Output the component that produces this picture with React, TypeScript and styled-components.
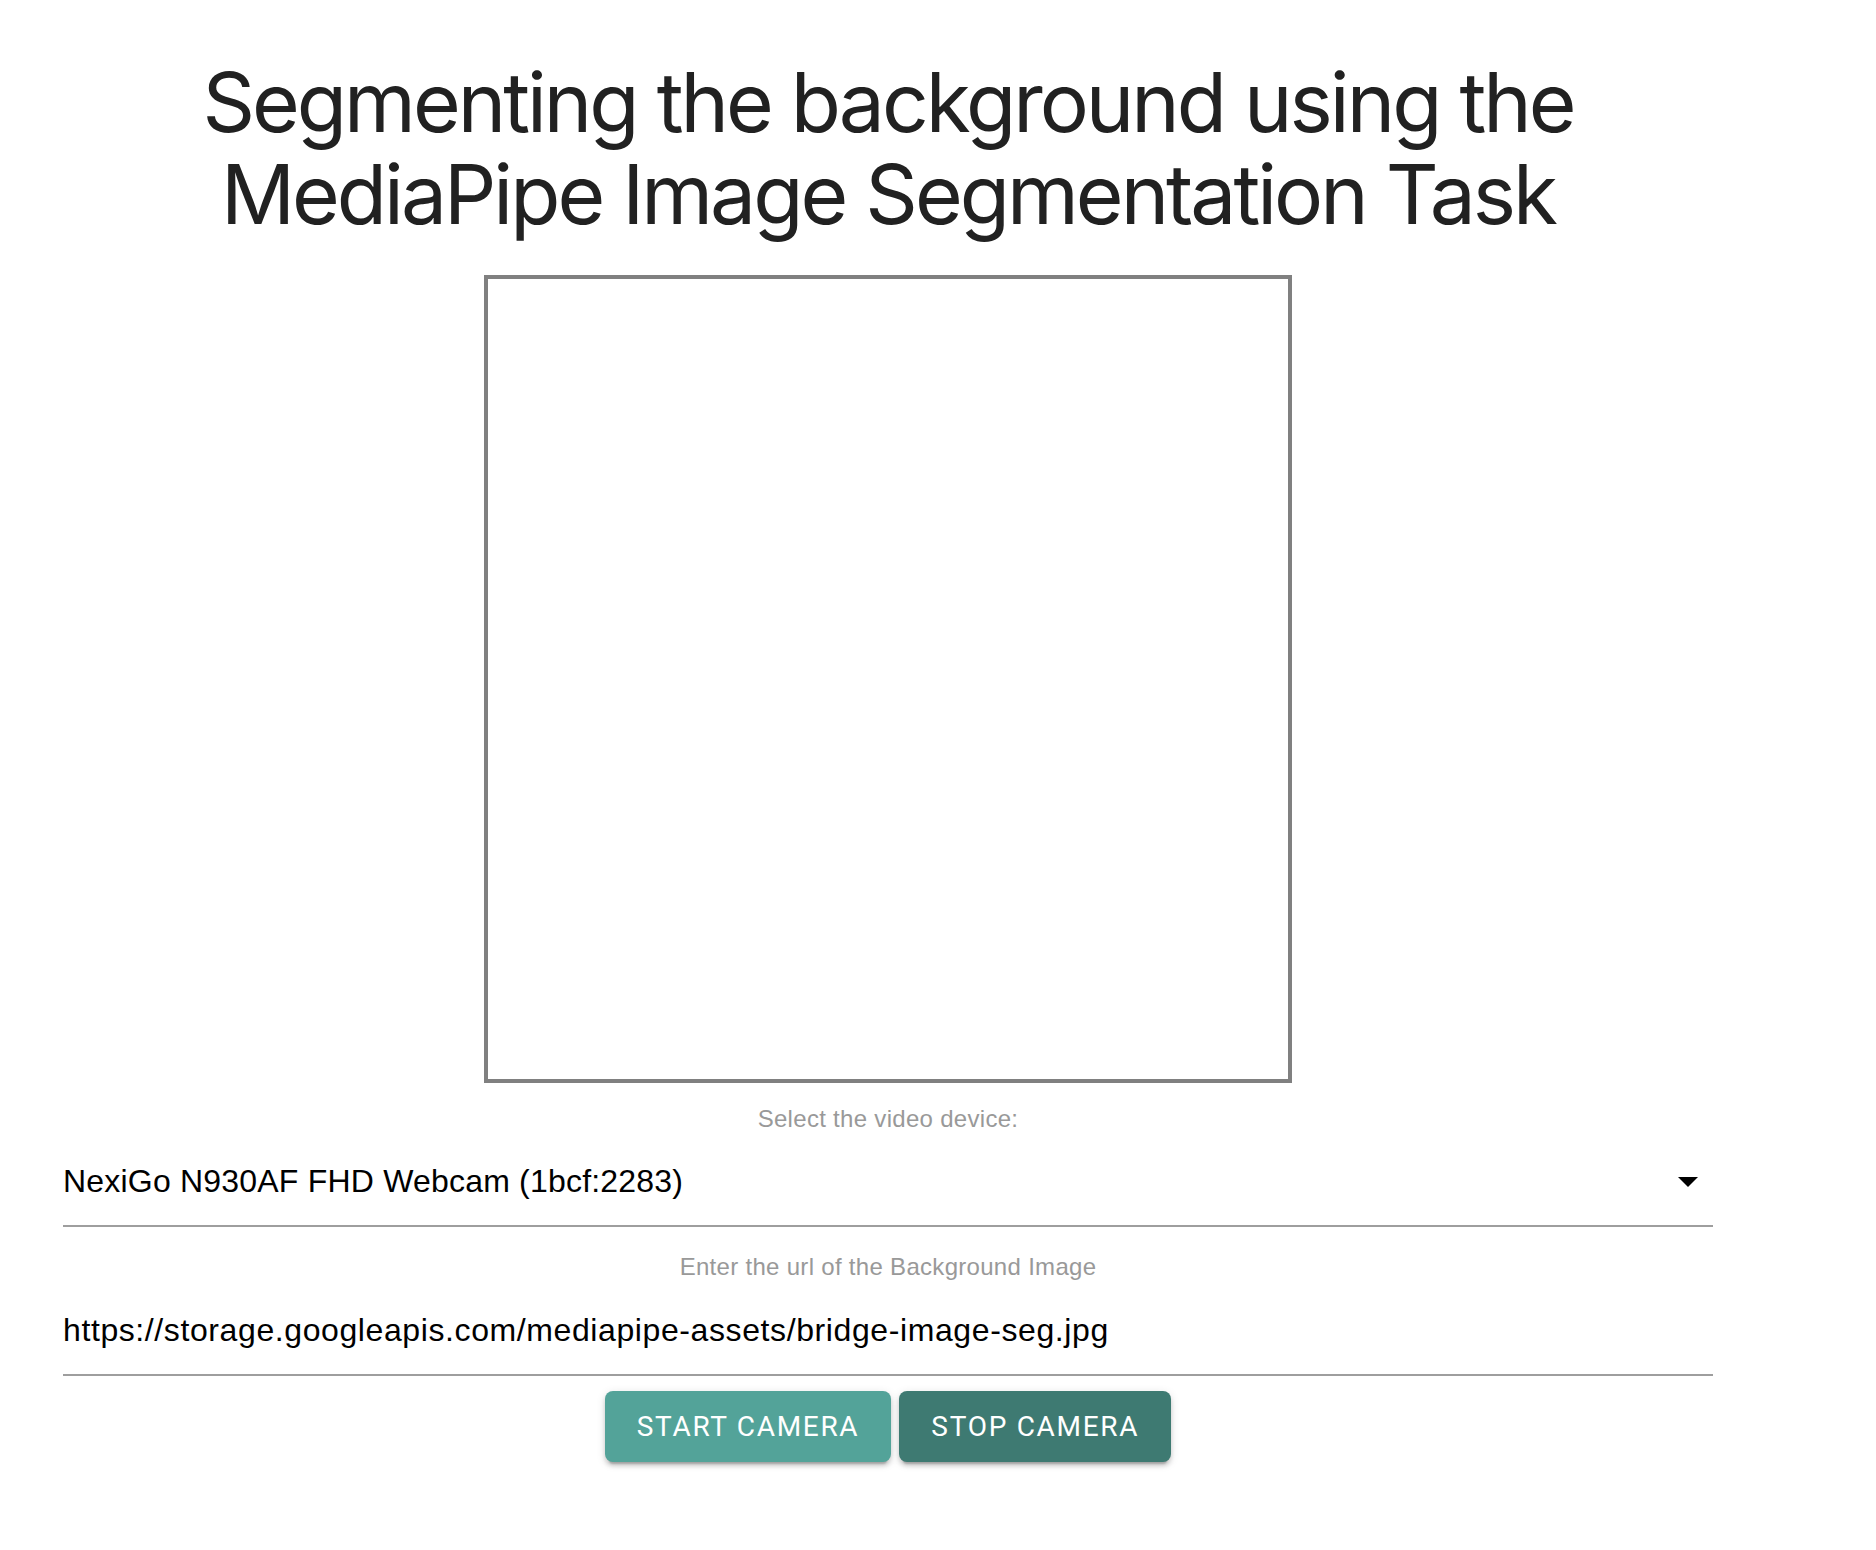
import styled, { createGlobalStyle } from 'styled-components';

const GlobalStyle = createGlobalStyle`
  html, body {
    margin: 0;
    padding: 0;
    background: #ffffff;
  }
`;

export default function App() {
  return (
    <>
      <GlobalStyle />
      <UIPage>
        <UITitle>
          Segmenting the background using the
          <br />
          MediaPipe Image Segmentation Task
        </UITitle>
        <UICanvas />
        <UIFieldLabel $gap={22}>Select the video device:</UIFieldLabel>
        <UISelect>
          <UISelectValue>NexiGo N930AF FHD Webcam (1bcf:2283)</UISelectValue>
          <UIArrow viewBox="0 0 24 24">
            <path d="M7 10l5 5 5-5z" />
          </UIArrow>
        </UISelect>
        <UIFieldLabel $gap={26}>Enter the url of the Background Image</UIFieldLabel>
        <UIInput
          type="text"
          defaultValue="https://storage.googleapis.com/mediapipe-assets/bridge-image-seg.jpg"
        />
        <UIButtons>
          <UIButton $tone="light">Start Camera</UIButton>
          <UIButton $tone="dark">Stop Camera</UIButton>
        </UIButtons>
      </UIPage>
    </>
  );
}

const UIPage = styled.div`
  width: 1776px;
  padding-top: 57px;
  padding-bottom: 80px;
  display: flex;
  flex-direction: column;
  align-items: center;
`;

const UITitle = styled.h1`
  margin: 0;
  font-family: Inter, 'Noto Sans', sans-serif;
  font-weight: 400;
  font-size: 82px;
  line-height: 92px;
  letter-spacing: -3px;
  color: #212121;
  text-align: center;
`;

const UICanvas = styled.div`
  margin-top: 34px;
  width: 800px;
  height: 800px;
  border: 4px solid #808080;
  background: #ffffff;
`;

const UIFieldLabel = styled.div<{ $gap: number }>`
  margin-top: ${({ $gap }) => $gap}px;
  font-family: 'Liberation Sans', Arial, sans-serif;
  font-size: 24px;
  line-height: 28px;
  letter-spacing: 0.3px;
  color: #999999;
  text-align: center;
`;

const UISelect = styled.div`
  align-self: stretch;
  margin: 12px 63px 0;
  height: 82px;
  display: flex;
  align-items: center;
  justify-content: space-between;
  border-bottom: 2px solid #9e9e9e;
  padding-bottom: 8px;
  box-sizing: border-box;
`;

const UISelectValue = styled.span`
  font-family: 'Liberation Sans', Arial, sans-serif;
  font-size: 32px;
  letter-spacing: 0.2px;
  color: #000000;
`;

const UIArrow = styled.svg`
  width: 48px;
  height: 48px;
  margin-right: 1px;
  fill: #000000;
`;

const UIInput = styled.input`
  align-self: stretch;
  margin: 14px 63px 0;
  height: 81px;
  padding: 0 0 8px;
  border: none;
  border-bottom: 2px solid #9e9e9e;
  outline: none;
  box-sizing: border-box;
  font-family: 'Liberation Sans', Arial, sans-serif;
  font-size: 32px;
  letter-spacing: 0.6px;
  color: #000000;
  background: transparent;
`;

const UIButtons = styled.div`
  margin-top: 15px;
  display: flex;
  gap: 8px;
`;

const UIButton = styled.button<{ $tone: 'light' | 'dark' }>`
  height: 71px;
  padding: 0 32px;
  border: none;
  border-radius: 8px;
  background: ${({ $tone }) => ($tone === 'light' ? '#53a399' : '#3e7a72')};
  color: #ffffff;
  font-family: Roboto, sans-serif;
  font-weight: 400;
  font-size: 28px;
  letter-spacing: 1.7px;
  text-transform: uppercase;
  box-shadow: 0 6px 2px -4px rgba(0, 0, 0, 0.2), 0 4px 4px 0 rgba(0, 0, 0, 0.14),
    0 2px 10px 0 rgba(0, 0, 0, 0.12);
  cursor: pointer;
`;
